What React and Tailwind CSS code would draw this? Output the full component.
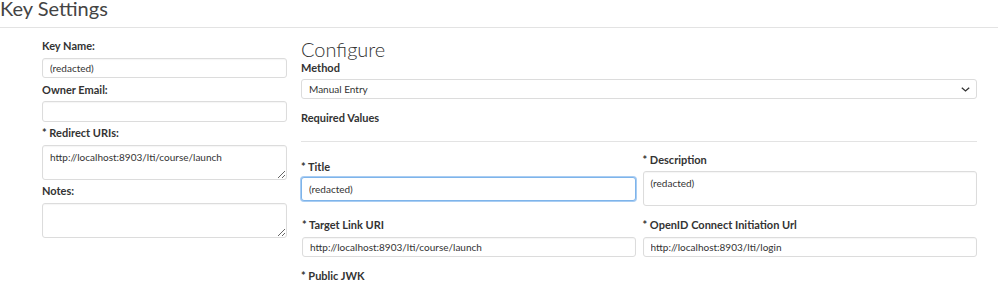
const font = { fontFamily: 'Lato, "Open Sans", sans-serif' }

function Label({ children, className = '' }) {
  return <label className={`block text-[11px] font-bold leading-[14px] text-[#333] ${className}`}>{children}</label>
}

function TextInput({ value = '', focused = false, className = '' }) {
  const ring = focused
    ? 'border-[#7eb4ea] shadow-[0_0_0_1px_#a9cdf3]'
    : 'border-[#dcdcdc] shadow-[inset_0_1px_1px_rgba(0,0,0,0.04)]'
  return (
    <input
      type="text"
      readOnly
      defaultValue={value}
      className={`block w-full rounded-[3px] border bg-white px-[7px] text-[10px] text-[#333] outline-none ${ring} ${className}`}
    />
  )
}

function TextArea({ value = '', className = '' }) {
  return (
    <textarea
      readOnly
      defaultValue={value}
      className={`block w-full rounded-[3px] border border-[#dcdcdc] bg-white px-[7px] pt-[5px] text-[10px] leading-[13px] text-[#333] shadow-[inset_0_1px_1px_rgba(0,0,0,0.04)] outline-none ${className}`}
    />
  )
}

export default function App() {
  return (
    <div className="h-[283px] w-[998px] overflow-hidden bg-white" style={font}>
      <div className="h-[28px] border-b border-[#e3e3e3]">
        <h1 className="text-[20px] font-normal leading-[17px] text-[#444]">Key Settings</h1>
      </div>

      <div className="flex pl-[42px] pr-[21px]">
        {/* left column */}
        <div className="w-[245px] shrink-0 pt-[11px]">
          <Label>Key Name:</Label>
          <TextInput value="(redacted)" className="mt-[5px] h-[20px]" />
          <Label className="mt-[5px]">Owner Email:</Label>
          <TextInput className="mt-[4px] h-[21px]" />
          <Label className="mt-[4px]">* Redirect URIs:</Label>
          <TextArea value="http://localhost:8903/lti/course/launch" className="mt-[5px] h-[35px]" />
          <Label className="mt-[4px]">Notes:</Label>
          <TextArea className="mt-[5px] h-[35px]" />
        </div>

        {/* right column */}
        <div className="ml-[14px] flex-1 pt-[9px]">
          <h2 className="text-[20px] font-light leading-[24px] text-[#333]">Configure</h2>
          <Label>Method</Label>
          <div className="relative mt-[4px] flex h-[20px] items-center rounded-[3px] border border-[#dcdcdc] bg-white px-[7px] text-[10px] text-[#333]">
            Manual Entry
            <svg className="absolute right-[6px] top-[7px]" width="9" height="5" viewBox="0 0 9 5">
              <path d="M0.8 0.8 L4.5 4 L8.2 0.8" fill="none" stroke="#333" strokeWidth="1.3" />
            </svg>
          </div>
          <Label className="mt-[12px]">Required Values</Label>
          <div className="mt-[16px] border-b border-[#e3e3e3]" />

          <div className="grid grid-cols-2 gap-x-[7px]">
            <div className="pt-[18px]">
              <Label>* Title</Label>
              <TextInput value="(redacted)" focused className="mt-[3px] h-[24px]" />
            </div>
            <div className="pt-[11px]">
              <Label>* Description</Label>
              <TextArea value="(redacted)" className="mt-[4px] h-[35px] resize-none" />
            </div>
          </div>

          <div className="mt-[12px] grid grid-cols-2 gap-x-[7px]">
            <div className="pl-[1px]">
              <Label>* Target Link URI</Label>
              <TextInput value="http://localhost:8903/lti/course/launch" className="mt-[5px] h-[20px]" />
            </div>
            <div>
              <Label>* OpenID Connect Initiation Url</Label>
              <TextInput value="http://localhost:8903/lti/login" className="mt-[5px] h-[20px]" />
            </div>
          </div>

          <Label className="mt-[12px]">* Public JWK</Label>
        </div>
      </div>
    </div>
  )
}
